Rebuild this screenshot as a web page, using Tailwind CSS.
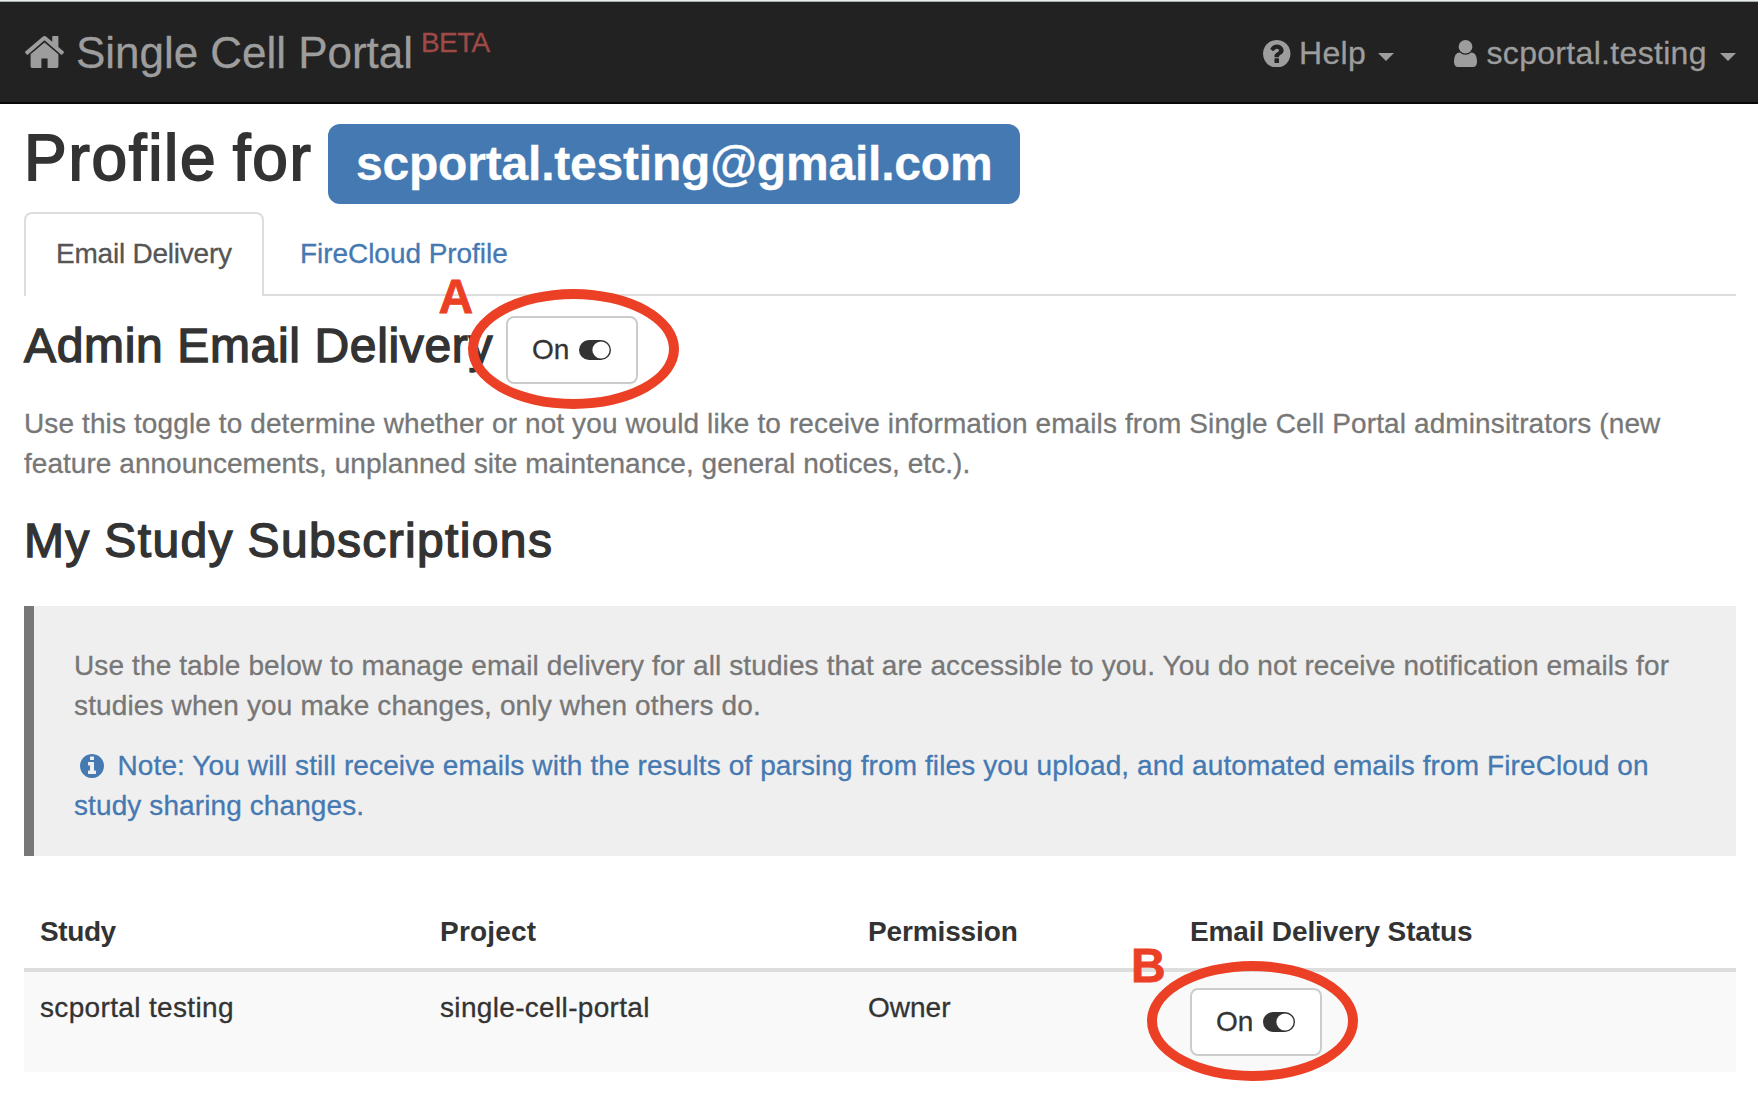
<!DOCTYPE html>
<html lang="en">
<head>
<meta charset="utf-8">
<title>Single Cell Portal</title>
<script src="https://cdn.jsdelivr.net/npm/@tailwindcss/browser@4"></script>
</head>
<body class="relative h-[1118px] overflow-hidden bg-white font-['Liberation_Sans',Arial,sans-serif] text-[28px] leading-10 whitespace-nowrap text-[#333] [-webkit-text-stroke-width:0.3px]">

<header class="flex h-[104px] flex-col">
  <div class="h-px bg-[#e9eded]"></div>
  <div class="h-px bg-[#a9acac]"></div>
  <nav class="flex h-[102px] items-start border-b-2 border-[#080808] bg-[#222] pt-px pr-[22px] pl-[25px] text-[#9d9d9d]">
    <a class="flex items-start">
      <svg class="mt-[33px] h-8 w-[39px] fill-current" viewBox="24 253 1616 1283" preserveAspectRatio="none"><path d="M1408 992v480q0 26-19 45t-45 19h-384v-384h-256v384h-384q-26 0-45-19t-19-45v-480q0-1 .5-3t.5-3l575-474 575 474q1 2 1 6zm223-69l-62 74q-8 9-21 11h-3q-13 0-21-7l-692-577-692 577q-12 8-24 7-13-2-21-11l-62-74q-8-10-7-23.5t11-21.5l719-599q32-26 76-26t76 26l244 204v-195q0-14 9-23t23-9h192q14 0 23 9t9 23v408l219 182q10 8 11 21.5t-7 23.5z"/></svg>
      <span class="ml-3 w-[339px] text-[44px] leading-[100px] tracking-[-0.03px]">Single Cell Portal</span>
      <sup class="static ml-1.5 text-[28px] leading-[80px] tracking-[-0.6px] text-[#a04a46]">BETA</sup>
    </a>
    <div class="ml-auto flex h-[100px] items-center text-[32px] leading-[100px]">
      <svg class="mt-px size-[27.5px] fill-current" viewBox="128 128 1536 1536"><path d="M1024 1376v-192q0-14-9-23t-23-9h-192q-14 0-23 9t-9 23v192q0 14 9 23t23 9h192q14 0 23-9t9-23zm256-672q0-88-55.5-163t-138.5-116-170-41q-243 0-371 213-15 24 8 42l132 100q7 6 19 6 16 0 25-12 53-68 86-92 34-24 86-24 48 0 85.5 26t37.5 59q0 38-20 61t-68 45q-63 28-115.5 86.5t-52.5 125.5v36q0 14 9 23t23 9h192q14 0 23-9t9-23q0-19 21.5-49.5t54.5-49.5q32-18 49-28.5t46-35 44.5-48 28-60.5 12.5-81zm384 192q0 209-103 385.5t-279.5 279.5-385.5 103-385.5-103-279.5-279.5-103-385.5 103-385.5 279.5-279.5 385.5-103 385.5 103 279.5 279.5 103 385.5z"/></svg>
      <span class="ml-2 tracking-[0.3px]">Help</span>
      <svg class="mt-[7px] ml-3 h-2 w-4 fill-current" viewBox="0 0 16 8"><path d="M0 0h16L8 8z"/></svg>
      <svg class="mt-px ml-[60px] h-[27px] w-[23px] fill-current" viewBox="256 128 1280 1536" preserveAspectRatio="none"><path d="M1536 1399q0 109-62.5 187t-150.5 78h-854q-88 0-150.5-78t-62.5-187q0-85 8.5-160.5t31.5-152 58.5-131 94-89 134.5-34.5q131 128 313 128t313-128q76 0 134.5 34.5t94 89 58.5 131 31.5 152 8.5 160.5zm-256-887q0 159-112.5 271.5t-271.5 112.5-271.5-112.5-112.5-271.5 112.5-271.5 271.5-112.5 271.5 112.5 112.5 271.5z"/></svg>
      <span class="ml-[9.5px] w-[222px] tracking-[0.32px]">scportal.testing</span>
      <svg class="mt-[7px] ml-[11.5px] h-2 w-4 fill-current" viewBox="0 0 16 8"><path d="M0 0h16L8 8z"/></svg>
    </div>
  </nav>
</header>

<main class="mr-[22px] ml-6 pt-5">
  <h1 class="flex h-20 items-start text-[64px] leading-[68px]">
    <span class="w-[304px] tracking-[1.7px] [word-spacing:-4px] [-webkit-text-stroke-width:1.8px]">Profile for</span>
    <span class="h-20 w-[692px] rounded-xl bg-[#4579b2] pl-7 text-[48px] leading-[79px] font-bold tracking-[-0.2px] text-white">scportal.testing@gmail.com</span>
  </h1>

  <ul class="mt-2 flex h-[84px] border-b-2 border-[#ddd] leading-[80px]">
    <li class="h-[84px] w-60 rounded-t-lg border-2 border-b-0 border-[#ddd] bg-white pl-[30px] tracking-[-0.22px] text-[#555]">Email Delivery</li>
    <li class="mt-0.5 ml-9 tracking-[-0.05px] text-[#4579b2]">FireCloud Profile</li>
  </ul>

  <section>
    <div class="mt-5 flex h-[68px] items-start">
      <h2 class="w-[482px] text-[48px] leading-[59px] tracking-[0.65px] [-webkit-text-stroke-width:1.4px]">Admin Email Delivery</h2>
      <button class="flex h-[68px] w-[132px] items-center rounded-lg border-2 border-[#ccc] bg-white pl-[24px] leading-[64px]">
        <span class="w-[46.5px] text-left">On</span>
        <svg class="h-5 w-8" viewBox="0 0 32 20"><rect width="32" height="20" rx="10" fill="#333"/><circle cx="22" cy="10" r="8.6" fill="#fff"/></svg>
      </button>
    </div>
    <p class="mt-5 text-[#777]"><span class="block tracking-[0.112px]">Use this toggle to determine whether or not you would like to receive information emails from Single Cell Portal adminsitrators (new</span><span class="block tracking-[0.04px]">feature announcements, unplanned site maintenance, general notices, etc.).</span></p>
  </section>

  <section>
    <h2 class="mt-[27px] text-[48px] leading-[60px] tracking-[1.35px] [word-spacing:-1px] [-webkit-text-stroke-width:1.4px]">My Study Subscriptions</h2>
    <blockquote class="mt-[35px] h-[250px] border-l-10 border-[#777] bg-[#efefef] pt-10 pl-10 text-[#777]">
      <p><span class="block tracking-[0.117px]">Use the table below to manage email delivery for all studies that are accessible to you. You do not receive notification emails for</span><span class="block tracking-[0.132px]">studies when you make changes, only when others do.</span></p>
      <p class="mt-5 text-[#4579b2]"><span class="flex h-10 items-start"><svg class="mt-2 mr-[13.5px] ml-1.5 size-6 fill-current" viewBox="128 128 1536 1536"><path d="M1152 1376v-160q0-14-9-23t-23-9h-96v-512q0-14-9-23t-23-9h-320q-14 0-23 9t-9 23v160q0 14 9 23t23 9h96v320h-96q-14 0-23 9t-9 23v160q0 14 9 23t23 9h448q14 0 23-9t9-23zm-128-896v-160q0-14-9-23t-23-9h-192q-14 0-23 9t-9 23v160q0 14 9 23t23 9h192q14 0 23-9t9-23zm640 416q0 209-103 385.5t-279.5 279.5-385.5 103-385.5-103-279.5-279.5-103-385.5 103-385.5 279.5-279.5 385.5-103 385.5 103 279.5 279.5 103 385.5z"/></svg><span class="tracking-[0.11px]">Note: You will still receive emails with the results of parsing from files you upload, and automated emails from FireCloud on</span></span><span class="block tracking-[0.1px]">study sharing changes.</span></p>
    </blockquote>

    <div class="mt-10">
      <div class="grid grid-cols-[400px_428px_322px_562px] border-b-4 border-[#ddd] py-4 font-bold *:pl-4 [-webkit-text-stroke-width:0px]">
        <div class="tracking-[-0.4px]">Study</div><div class="tracking-[0.2px]">Project</div><div class="tracking-[-0.13px]">Permission</div><div class="tracking-[-0.11px]">Email Delivery Status</div>
      </div>
      <div class="grid h-[100px] grid-cols-[400px_428px_322px_562px] items-start bg-[#f9f9f9] pt-4 *:pl-4">
        <div class="tracking-[0.35px]">scportal testing</div><div class="tracking-[0.33px]">single-cell-portal</div><div>Owner</div>
        <div>
          <button class="flex h-[68px] w-[132px] items-center rounded-lg border-2 border-[#ccc] bg-white pl-[24px] leading-[64px]">
            <span class="w-[46.5px] text-left">On</span>
            <svg class="h-5 w-8" viewBox="0 0 32 20"><rect width="32" height="20" rx="10" fill="#333"/><circle cx="22" cy="10" r="8.6" fill="#fff"/></svg>
          </button>
        </div>
      </div>
    </div>
  </section>
</main>

<!-- Callouts over the two toggles -->
<div class="absolute top-[289px] left-[468px] h-[120px] w-[211px] rounded-[50%] border-10 border-[#ec4026]"></div>
<div class="absolute top-[271px] left-[438.5px] text-[48px] leading-[52px] font-bold text-[#ec4026] [-webkit-text-stroke-width:0.8px]">A</div>
<div class="absolute top-[961px] left-[1147px] h-[120px] w-[211px] rounded-[50%] border-10 border-[#ec4026]"></div>
<div class="absolute top-[940px] left-[1131px] text-[48px] leading-[52px] font-bold text-[#ec4026] [-webkit-text-stroke-width:0.8px]">B</div>
</body>
</html>
